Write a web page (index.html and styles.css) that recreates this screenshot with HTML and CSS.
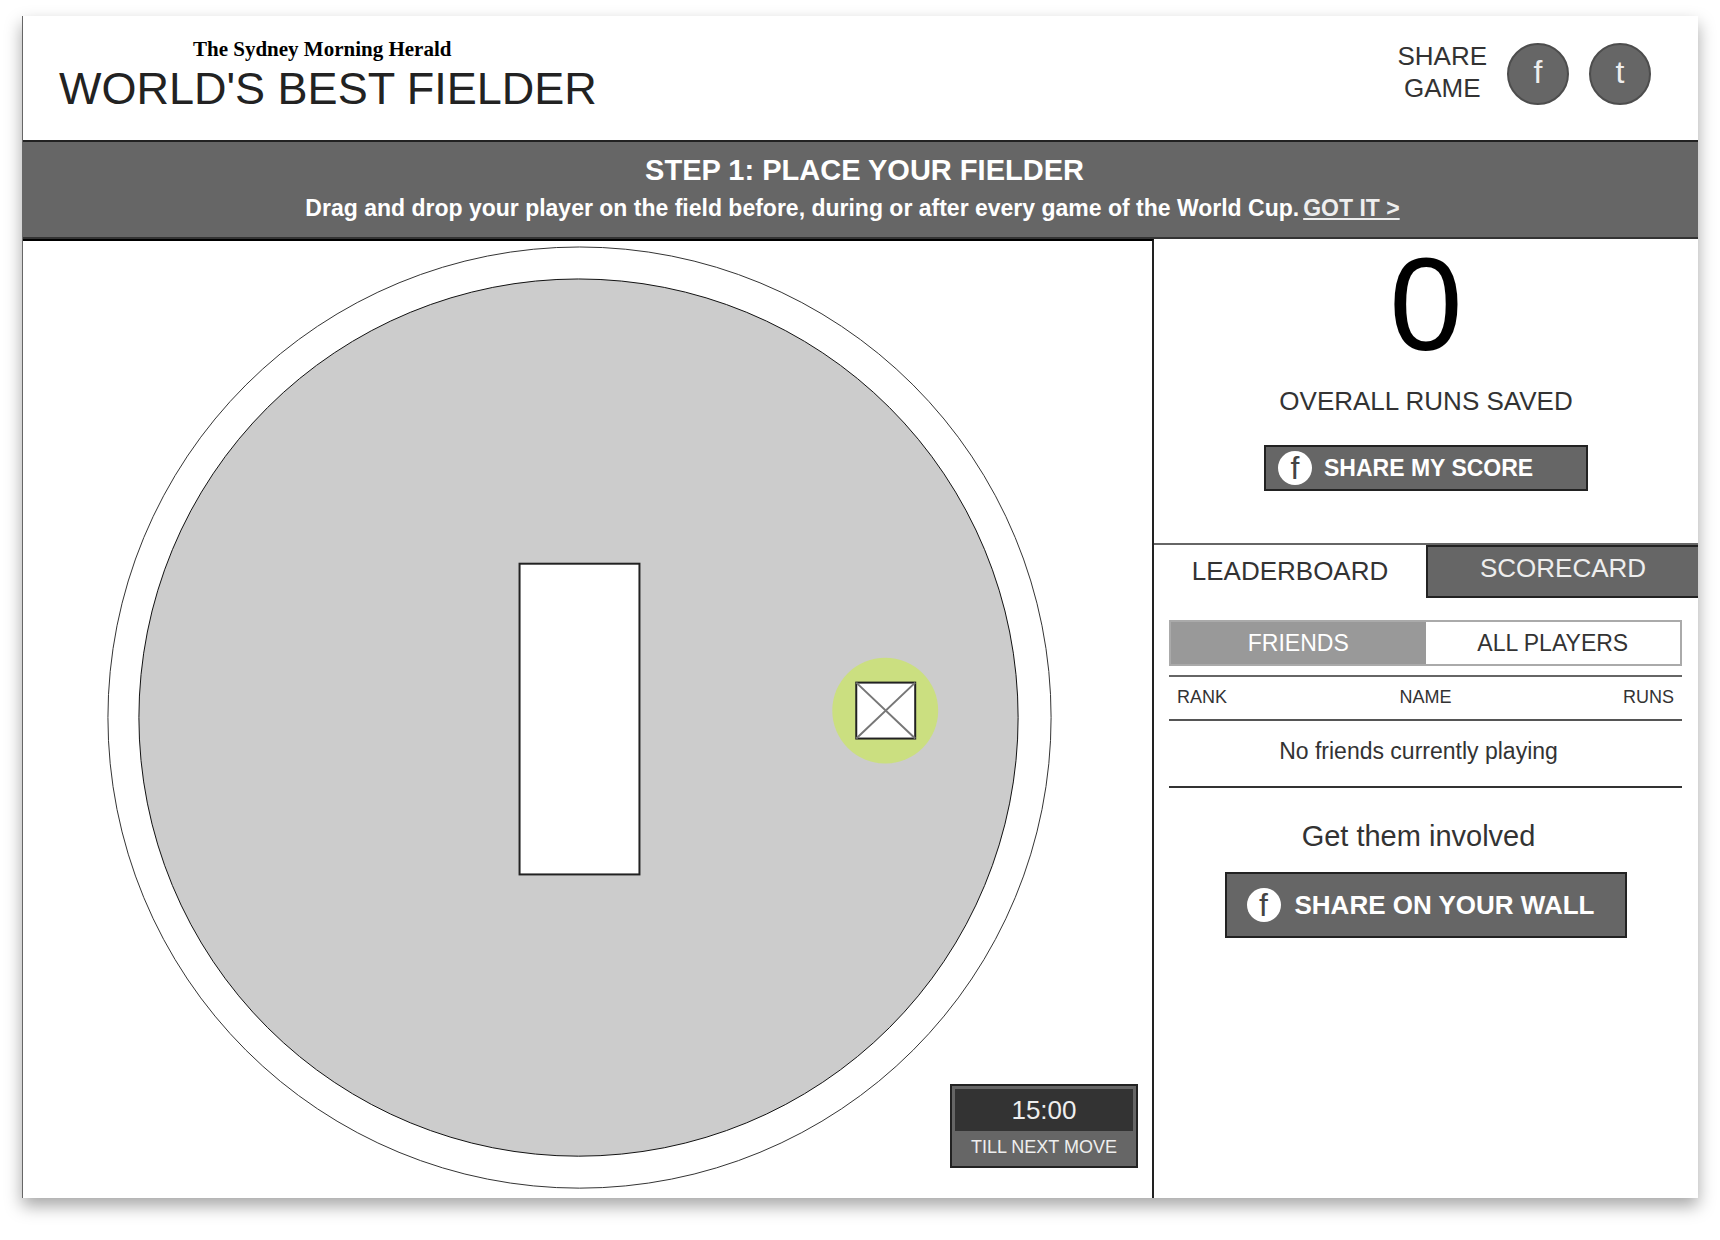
FILE: index.html
```html
<!DOCTYPE html>
<html lang="en">
<head>
    <meta charset="UTF-8">
    <meta name="viewport" content="width=device-width, initial-scale=1.0">
    <title>World's Best Fielder</title>
    <link rel="stylesheet" href="styles.css">
</head>
<body>
    <div class="game">
        <header class="header">
            <div class="brand">
                <div class="masthead">The Sydney Morning Herald</div>
                <h1>WORLD'S BEST FIELDER</h1>
            </div>
            <div class="share">
                <span class="share-label">SHARE<br>GAME</span>
                <a class="share-link" href="#facebook">f</a>
                <a class="share-link" href="#twitter">t</a>
            </div>
        </header>

        <section class="banner">
            <h2>STEP 1: PLACE YOUR FIELDER</h2>
            <p>Drag and drop your player on the field before, during or after every game of the World Cup.<a href="#field">GOT IT &gt;</a></p>
        </section>

        <main class="main">
            <section class="field" id="field">
                <svg class="ground" viewBox="0 0 1130 958">
                    <!-- boundary and outfield -->
                    <ellipse cx="557" cy="477" rx="472" ry="471" fill="#fff" stroke="#333" stroke-width="1"/>
                    <ellipse cx="556" cy="477" rx="440" ry="439" fill="#ccc" stroke="#111" stroke-width="1"/>
                    <!-- pitch -->
                    <rect x="497" y="323" width="120" height="311" fill="#fff" stroke="#222" stroke-width="2"/>
                    <!-- player -->
                    <circle cx="863" cy="470" r="53" fill="#cbdf80"/>
                    <rect x="834" y="442" width="59" height="56" fill="#fff" stroke="#222" stroke-width="2"/>
                    <path d="M834 442l59 56M893 442l-59 56" stroke="#777" stroke-width="2"/>
                </svg>
                <div class="timer">
                    <div class="timer-value">15:00</div>
                    <div class="timer-label">TILL NEXT MOVE</div>
                </div>
            </section>

            <aside class="sidebar">
                <section class="score">
                    <div class="score-value">0</div>
                    <div class="score-label">OVERALL RUNS SAVED</div>
                    <button class="btn btn-score" type="button"><span class="icon">f</span>SHARE MY SCORE</button>
                </section>

                <nav class="tabs">
                    <button class="tab active" type="button">LEADERBOARD</button>
                    <button class="tab" type="button">SCORECARD</button>
                </nav>

                <section class="board">
                    <div class="toggle">
                        <button class="toggle-btn active" type="button">FRIENDS</button>
                        <button class="toggle-btn" type="button">ALL PLAYERS</button>
                    </div>
                    <table class="ranks">
                        <thead>
                            <tr>
                                <th>RANK</th>
                                <th>NAME</th>
                                <th>RUNS</th>
                            </tr>
                        </thead>
                        <tbody>
                            <tr>
                                <td colspan="3">No friends currently playing</td>
                            </tr>
                        </tbody>
                    </table>
                    <p class="invite">Get them involved</p>
                    <button class="btn btn-wall" type="button"><span class="icon">f</span>SHARE ON YOUR WALL</button>
                </section>
            </aside>
        </main>
    </div>
</body>
</html>
```

FILE: styles.css
```css
* {
    box-sizing: border-box;
}

body {
    font-family: 'Liberation Sans', Arial, sans-serif;
    background-color: #fff;
    margin: 0;
    padding: 16px 22px 42px;
    color: #333;
}

h1, h2, p {
    margin: 0;
    font-weight: normal;
}

button {
    font-family: inherit;
    border: none;
    padding: 0;
    cursor: pointer;
}

.game {
    background-color: #fff;
    border-left: 1px solid #666;
    box-shadow: 0 8px 16px rgba(0, 0, 0, 0.35);
}

/* Header */
.header {
    display: flex;
    justify-content: space-between;
    align-items: flex-start;
    height: 124px;
    padding: 20px 47px 0 36px;
}

.masthead {
    font-family: 'Liberation Serif', 'Times New Roman', serif;
    font-size: 21px;
    font-weight: bold;
    line-height: 26px;
    margin-left: 134px;
    color: #000;
}

h1 {
    font-size: 45px;
    line-height: 54px;
    color: #222;
}

.share {
    display: flex;
    align-items: center;
    gap: 20px;
    padding-top: 4px;
}

.share-label {
    font-size: 26px;
    line-height: 32px;
    padding-bottom: 4px;
    text-align: center;
}

.share-link {
    width: 62px;
    height: 62px;
    border: 2px solid #4d4d4d;
    border-radius: 50%;
    background-color: #666;
    color: #eee;
    font-size: 32px;
    line-height: 54px;
    text-align: center;
    text-decoration: none;
}

/* Step banner */
.banner {
    height: 99px;
    padding-top: 10px;
    border-top: 2px solid #222;
    border-bottom: 2px solid #333;
    background-color: #666;
    color: #fff;
    text-align: center;
}

.banner h2 {
    padding-left: 8px;
    font-size: 29px;
    font-weight: bold;
    line-height: 36px;
}

.banner p {
    padding-right: 16px;
    font-size: 23px;
    font-weight: bold;
    line-height: 40px;
}

.banner a {
    margin-left: 4px;
    color: #eee;
}

/* Field */
.main {
    display: grid;
    grid-template-columns: 1131fr 544fr;
}

.field {
    position: relative;
    border-top: 2px solid #000;
    border-right: 2px solid #222;
}

.ground {
    display: block;
    width: 100%;
}

.timer {
    position: absolute;
    right: 14px;
    bottom: 30px;
    width: 188px;
    padding: 3px;
    border: 2px solid #222;
    background-color: #666;
    color: #eee;
    text-align: center;
}

.timer-value {
    background-color: #333;
    font-size: 26px;
    line-height: 42px;
}

.timer-label {
    font-size: 18px;
    line-height: 32px;
}

/* Score */
.score {
    display: flex;
    flex-direction: column;
    align-items: center;
    height: 306px;
    border-bottom: 2px solid #666;
}

.score-value {
    font-size: 132px;
    line-height: 132px;
    color: #000;
}

.score-label {
    font-size: 26px;
    line-height: 32px;
    margin: 14px 0 28px;
}

.btn {
    display: flex;
    align-items: center;
    border: 2px solid #222;
    background-color: #666;
    color: #fff;
    font-weight: bold;
}

.btn-score {
    width: 324px;
    height: 46px;
    padding-left: 12px;
    gap: 12px;
    font-size: 23px;
}

.btn-wall {
    width: 402px;
    height: 66px;
    margin: 0 auto;
    padding-left: 20px;
    gap: 14px;
    font-size: 26px;
}

.icon {
    width: 34px;
    height: 34px;
    border-radius: 50%;
    background-color: #fff;
    color: #444;
    font-size: 32px;
    font-weight: normal;
    line-height: 34px;
    text-align: center;
}

/* Leaderboard */
.tabs {
    display: grid;
    grid-template-columns: 1fr 1fr;
}

.tab {
    height: 53px;
    padding-bottom: 6px;
    border: 2px solid #222;
    border-right: none;
    background-color: #666;
    color: #eee;
    font-size: 26px;
}

.tab.active {
    padding-bottom: 0;
    border: none;
    background-color: #fff;
    color: #333;
}

.board {
    padding: 22px 16px 0 15px;
}

.toggle {
    display: grid;
    grid-template-columns: 1fr 1fr;
    border: 2px solid #aaa;
}

.toggle-btn {
    height: 42px;
    background-color: #fff;
    color: #333;
    font-size: 23px;
}

.toggle-btn.active {
    background-color: #999;
    color: #fff;
}

.ranks {
    width: 100%;
    margin-top: 9px;
    border-top: 2px solid #666;
    border-collapse: collapse;
    table-layout: fixed;
}

.ranks th {
    height: 44px;
    padding: 0 8px 2px;
    border-bottom: 2px solid #555;
    font-size: 18px;
    font-weight: normal;
}

.ranks th:first-child {
    text-align: left;
}

.ranks th:last-child {
    text-align: right;
}

.ranks td {
    height: 67px;
    padding: 0 14px 4px 0;
    border-bottom: 2px solid #333;
    font-size: 23px;
    text-align: center;
}

.invite {
    padding: 32px 14px 20px 0;
    font-size: 29px;
    line-height: 32px;
    text-align: center;
}
```
